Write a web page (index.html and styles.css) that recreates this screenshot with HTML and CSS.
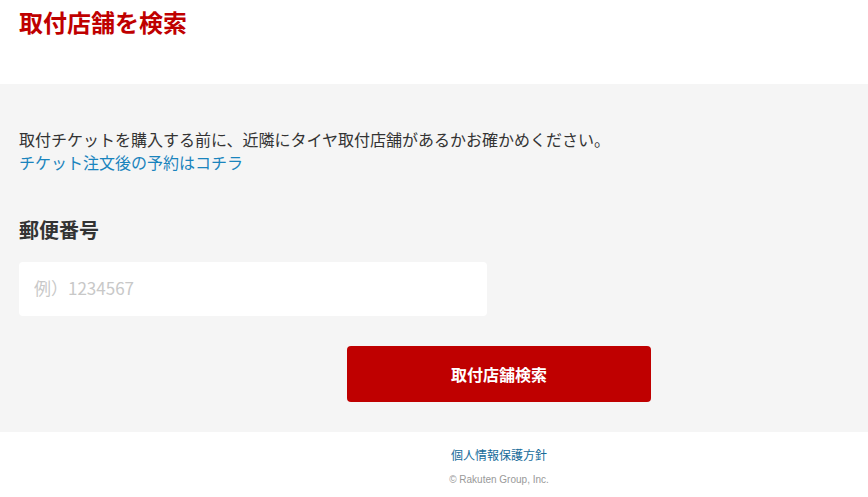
FILE: index.html
```html
<!DOCTYPE html>
<html lang="ja">
  <head>
    <meta charset="UTF-8" />
    <meta name="viewport" content="width=device-width, initial-scale=1.0" />
    <title>取付店舗を検索</title>
    <link rel="stylesheet" href="styles.css">
  </head>
  <body>
    <header class="header">
      <h1 class="title">取付店舗を検索</h1>
    </header>
    <main class="search">
      <p class="lead">
        取付チケットを購入する前に、近隣にタイヤ取付店舗があるかお確かめください。<br />
        <a href="#" class="lead-link">チケット注文後の予約はコチラ</a>
      </p>
      <form class="search-form">
        <label for="zip" class="zip-label">郵便番号</label>
        <input type="text" id="zip" name="zip" class="zip-input" placeholder="例）1234567" />
        <div class="actions">
          <button type="submit" class="btn-search">取付店舗検索</button>
        </div>
      </form>
    </main>
    <footer class="footer">
      <a href="#" class="footer-link">個人情報保護方針</a>
      <p class="copyright">© Rakuten Group, Inc.</p>
    </footer>
  </body>
</html>
```

FILE: styles.css
```css
body {
  margin: 0;
  font-family: "Noto Sans CJK JP", "Noto Sans", sans-serif;
  color: #333333;
  background-color: #ffffff;
}
.header {
  height: 84px;
  padding: 0 19px;
}
.title {
  margin: 0;
  padding-top: 4px;
  font-size: 24px;
  line-height: 36px;
  font-weight: bold;
  color: #bf0000;
}
.search {
  background-color: #f5f5f5;
  padding: 44px 19px 30px;
}
.lead {
  margin: 0;
  font-size: 16px;
  line-height: 23px;
}
.lead-link {
  color: #1a84bd;
  text-decoration: none;
}
.search-form {
  width: 632px;
  display: flex;
  flex-direction: column;
}
.zip-label {
  margin-top: 41px;
  font-size: 20px;
  line-height: 30px;
  font-weight: bold;
  color: #333333;
}
.zip-input {
  box-sizing: border-box;
  width: 468px;
  height: 54px;
  margin-top: 17px;
  padding: 0 15px 3px;
  border: none;
  border-radius: 4px;
  background-color: #ffffff;
  outline: none;
  font-family: "Noto Sans CJK JP", sans-serif;
  font-size: 17px;
  color: #333333;
}
.zip-input::placeholder {
  color: #c8c8c8;
}
.actions {
  display: flex;
  justify-content: flex-end;
  margin-top: 30px;
}
.btn-search {
  width: 304px;
  height: 56px;
  border: none;
  border-radius: 4px;
  background-color: #bf0000;
  color: #ffffff;
  font-family: "Noto Sans CJK JP", sans-serif;
  font-size: 16px;
  font-weight: bold;
}
.footer {
  width: 304px;
  margin-left: 347px;
  padding-top: 14px;
  text-align: center;
}
.footer-link {
  display: block;
  font-size: 12px;
  line-height: 18px;
  color: #166b9a;
  text-decoration: none;
}
.copyright {
  margin: 9px 0 0;
  font-family: "Liberation Sans", sans-serif;
  font-size: 10px;
  line-height: 14px;
  color: #999999;
}
```
